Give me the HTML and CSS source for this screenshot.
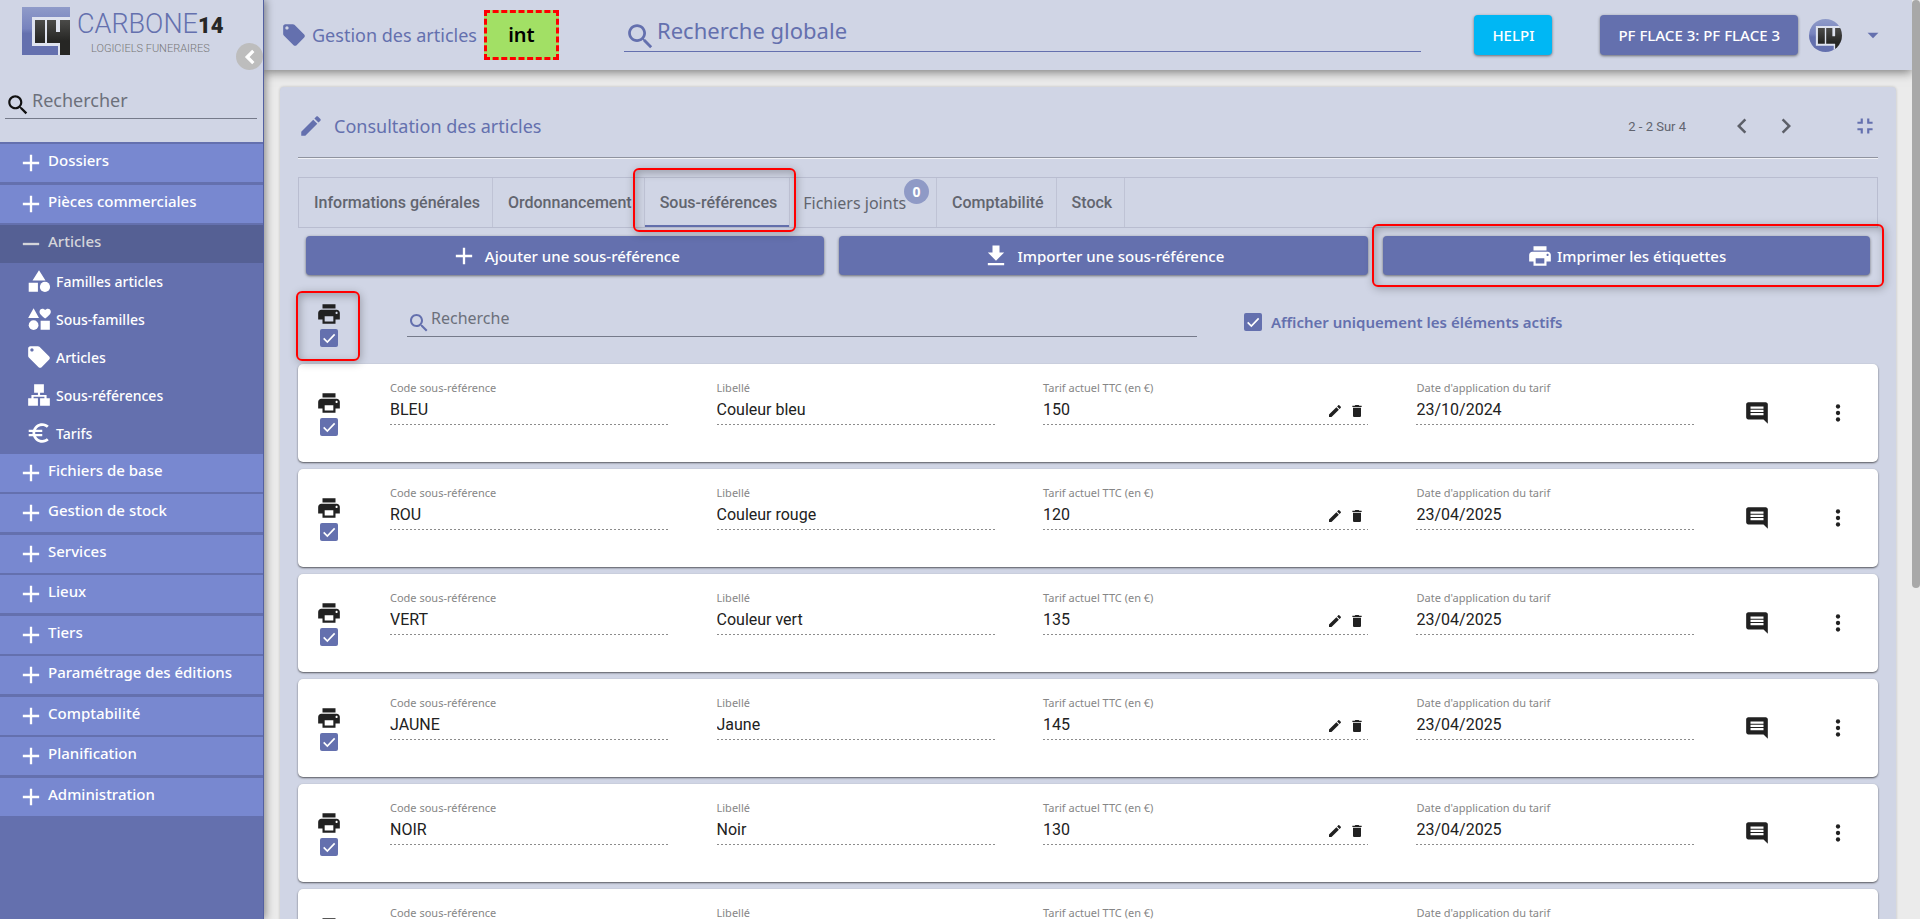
FILE: index.html
```html
<!DOCTYPE html>
<html lang="fr">
<head>
    <meta charset="utf-8">
    <title>Carbone14 - Consultation des articles</title>
    <link rel="stylesheet" href="styles.css">
</head>
<body>
    <svg class="sprite" aria-hidden="true">
        <linearGradient id="logo-blue" x1="0" y1="0" x2="0" y2="1">
            <stop offset="0" stop-color="#8f9bc9"/>
            <stop offset=".45" stop-color="#7783be"/>
            <stop offset=".55" stop-color="#6470ae"/>
        </linearGradient>
        <linearGradient id="logo-dark" x1="0" y1="0" x2="0" y2="1">
            <stop offset="0" stop-color="#4b4b49"/>
            <stop offset=".6" stop-color="#262624"/>
        </linearGradient>
        <symbol id="logo" viewBox="0 0 48 48">
            <path fill="url(#logo-blue)" d="M0 0h48v48H0z"/>
            <path fill="#dfe3ef" d="M10 10h38v38H36v-9H10z"/>
            <path fill="url(#logo-dark)" d="M13 13h10v23H13zM25 13h9v12h4V13h10v35H38V36H25z"/>
        </symbol>
        <symbol id="print" viewBox="0 0 24 24"><path d="M19 8H5c-1.66 0-3 1.34-3 3v6h4v4h12v-4h4v-6c0-1.66-1.34-3-3-3zm-3 11H8v-5h8v5zm3-7c-.55 0-1-.45-1-1s.45-1 1-1 1 .45 1 1-.45 1-1 1zm-1-9H6v4h12V3z"/></symbol>
        <symbol id="search" viewBox="0 0 24 24"><path d="M15.5 14h-.79l-.28-.27C15.41 12.59 16 11.11 16 9.5 16 5.91 13.09 3 9.5 3S3 5.91 3 9.5 5.91 16 9.5 16c1.61 0 3.09-.59 4.23-1.57l.27.28v.79l5 4.99L20.49 19l-4.99-5zm-6 0C7.01 14 5 11.99 5 9.5S7.01 5 9.5 5 14 7.01 14 9.5 11.99 14 9.5 14z"/></symbol>
        <symbol id="edit" viewBox="0 0 24 24"><path d="M3 17.25V21h3.75L17.81 9.94l-3.75-3.75L3 17.25zM20.71 7.04c.39-.39.39-1.02 0-1.41l-2.34-2.34c-.39-.39-1.02-.39-1.41 0l-1.83 1.83 3.75 3.75 1.83-1.83z"/></symbol>
        <symbol id="delete" viewBox="0 0 24 24"><path d="M6 19c0 1.1.9 2 2 2h8c1.1 0 2-.9 2-2V7H6v12zM19 4h-3.5l-1-1h-5l-1 1H5v2h14V4z"/></symbol>
        <symbol id="comment" viewBox="0 0 24 24"><path d="M21.99 4c0-1.1-.89-2-1.99-2H4c-1.1 0-2 .9-2 2v12c0 1.1.9 2 2 2h14l4 4-.01-18zM18 14H6v-2h12v2zm0-3H6V9h12v2zm0-3H6V6h12v2z"/></symbol>
        <symbol id="more" viewBox="0 0 24 24"><circle cx="12" cy="6" r="2"/><circle cx="12" cy="12" r="2"/><circle cx="12" cy="18" r="2"/></symbol>
        <symbol id="exit" viewBox="0 0 24 24"><path d="M5 16h3v3h2v-5H5v2zm3-8H5v2h5V5H8v3zm6 11h2v-3h3v-2h-5v5zm2-11V5h-2v5h5V8h-3z"/></symbol>
        <symbol id="left" viewBox="0 0 24 24"><path d="M15.41 7.41L14 6l-6 6 6 6 1.41-1.41L10.83 12z"/></symbol>
        <symbol id="right" viewBox="0 0 24 24"><path d="M10 6L8.59 7.41 13.17 12l-4.58 4.59L10 18l6-6z"/></symbol>
        <symbol id="caret" viewBox="0 0 24 24"><path d="M7 10l5 5 5-5z"/></symbol>
        <symbol id="plus" viewBox="0 0 24 24"><path d="M19 13h-6v6h-2v-6H5v-2h6V5h2v6h6v2z"/></symbol>
        <symbol id="minus" viewBox="0 0 24 24"><path d="M19 13H5v-2h14v2z"/></symbol>
        <symbol id="download" viewBox="0 0 24 24"><path d="M5 20h14v-2H5v2zM19 9h-4V3H9v6H5l7 7 7-7z"/></symbol>
        <symbol id="tag" viewBox="0 0 24 24"><path d="M21.41 11.58l-9-9C12.05 2.22 11.55 2 11 2H4c-1.1 0-2 .9-2 2v7c0 .55.22 1.05.59 1.42l9 9c.36.36.86.58 1.41.58.55 0 1.05-.22 1.41-.59l7-7c.37-.36.59-.86.59-1.41 0-.55-.23-1.06-.59-1.42zM5.5 7C4.67 7 4 6.33 4 5.5S4.67 4 5.5 4 7 4.67 7 5.5 6.33 7 5.5 7z"/></symbol>
        <symbol id="shapes" viewBox="0 0 24 24"><path d="M12 2l6 9.5H6zM2.5 13.5H11V22H2.5z"/><circle cx="17.5" cy="17.5" r="4.7"/></symbol>
        <symbol id="shapes-four" viewBox="0 0 24 24"><path d="M7 2l5 9H2zM13.5 13.5H22V22h-8.5zM17.7 11.5C14 8.5 12.5 7.2 12.5 5.2c0-1.7 1.2-2.7 2.7-2.7 1 0 1.9.5 2.5 1.3.6-.8 1.5-1.3 2.5-1.3 1.5 0 2.7 1 2.7 2.7 0 2-1.5 3.3-5.2 6.3z"/><circle cx="7" cy="17.7" r="4.5"/></symbol>
        <symbol id="sitemap" viewBox="0 0 24 24"><path d="M7.5 2h9v8H13v2h6v3h3v7h-9v-7h4v-1.5H7V15h4v7H2v-7h3v-3h6v-2H7.5z"/></symbol>
        <symbol id="euro" viewBox="0 0 24 24"><path d="M15 18.5c-2.51 0-4.68-1.42-5.76-3.5H15v-2H8.58c-.05-.33-.08-.66-.08-1s.03-.67.08-1H15V9H9.24C10.32 6.92 12.5 5.5 15 5.5c1.61 0 3.09.59 4.23 1.57L21 5.3C19.41 3.87 17.3 3 15 3c-3.92 0-7.24 2.51-8.48 6H2.5v2h3.56c-.04.33-.06.66-.06 1s.02.67.06 1H2.5v2h4.02c1.24 3.49 4.56 6 8.48 6 2.31 0 4.41-.87 6-2.3l-1.78-1.77c-1.13.98-2.6 1.57-4.22 1.57z"/></symbol>
    </svg>

    <aside class="sidebar">
        <div class="sidebar-top">
            <div class="brand">
                <svg class="brand-mark"><use href="#logo"/></svg>
                <div class="brand-text">
                    <div class="brand-name">CARBONE<b>14</b></div>
                    <div class="brand-sub">LOGICIELS FUNERAIRES</div>
                </div>
            </div>
            <button class="collapse" aria-label="Réduire le menu"><svg class="icon"><use href="#left"/></svg></button>
            <label class="search-field side-search">
                <svg class="icon"><use href="#search"/></svg>
                <input type="text" placeholder="Rechercher" aria-label="Rechercher">
            </label>
        </div>
        <nav class="menu">
            <button class="menu-item"><svg class="icon"><use href="#plus"/></svg>Dossiers</button>
            <button class="menu-item odd"><svg class="icon"><use href="#plus"/></svg>Pièces commerciales</button>
            <button class="menu-item open"><svg class="icon"><use href="#minus"/></svg>Articles</button>
            <div class="submenu">
                <a href="#"><svg class="icon"><use href="#shapes"/></svg>Familles articles</a>
                <a href="#"><svg class="icon"><use href="#shapes-four"/></svg>Sous-familles</a>
                <a href="#"><svg class="icon"><use href="#tag"/></svg>Articles</a>
                <a href="#"><svg class="icon"><use href="#sitemap"/></svg>Sous-références</a>
                <a href="#"><svg class="icon"><use href="#euro"/></svg>Tarifs</a>
            </div>
            <button class="menu-item after-submenu"><svg class="icon"><use href="#plus"/></svg>Fichiers de base</button>
            <button class="menu-item"><svg class="icon"><use href="#plus"/></svg>Gestion de stock</button>
            <button class="menu-item odd"><svg class="icon"><use href="#plus"/></svg>Services</button>
            <button class="menu-item"><svg class="icon"><use href="#plus"/></svg>Lieux</button>
            <button class="menu-item odd"><svg class="icon"><use href="#plus"/></svg>Tiers</button>
            <button class="menu-item"><svg class="icon"><use href="#plus"/></svg>Paramétrage des éditions</button>
            <button class="menu-item odd"><svg class="icon"><use href="#plus"/></svg>Comptabilité</button>
            <button class="menu-item"><svg class="icon"><use href="#plus"/></svg>Planification</button>
            <button class="menu-item odd"><svg class="icon"><use href="#plus"/></svg>Administration</button>
        </nav>
    </aside>

    <div class="page">
        <header class="topbar">
            <svg class="icon"><use href="#tag"/></svg>
            <span class="topbar-title">Gestion des articles</span>
            <span class="env">int</span>
            <label class="search-field global-search">
                <svg class="icon"><use href="#search"/></svg>
                <input type="text" placeholder="Recherche globale" aria-label="Recherche globale">
            </label>
            <button class="btn btn-help">HELPI</button>
            <button class="btn btn-site">PF FLACE 3: PF FLACE 3</button>
            <svg class="avatar"><use href="#logo"/></svg>
            <button class="icon-btn user-menu" aria-label="Menu utilisateur"><svg class="icon"><use href="#caret"/></svg></button>
        </header>

        <main class="card">
            <div class="card-header">
                <svg class="icon"><use href="#edit"/></svg>
                <h1>Consultation des articles</h1>
                <span class="pager-text">2 - 2 Sur 4</span>
                <button class="icon-btn pager-btn" aria-label="Précédent"><svg class="icon"><use href="#left"/></svg></button>
                <button class="icon-btn pager-btn" aria-label="Suivant"><svg class="icon"><use href="#right"/></svg></button>
                <button class="icon-btn exit-btn" aria-label="Quitter le plein écran"><svg class="icon"><use href="#exit"/></svg></button>
            </div>

            <div class="tabs" role="tablist">
                <button class="tab" role="tab">Informations générales</button>
                <button class="tab" role="tab">Ordonnancement</button>
                <button class="tab active marked" role="tab">Sous-références</button>
                <button class="tab tab-files" role="tab">Fichiers joints<span class="badge">0</span></button>
                <button class="tab" role="tab">Comptabilité</button>
                <button class="tab" role="tab">Stock</button>
            </div>

            <div class="actions">
                <button class="btn"><svg class="icon"><use href="#plus"/></svg>Ajouter une sous-référence</button>
                <button class="btn"><svg class="icon"><use href="#download"/></svg>Importer une sous-référence</button>
                <button class="btn btn-print marked"><svg class="icon"><use href="#print"/></svg>Imprimer les étiquettes</button>
            </div>

            <div class="filters">
                <label class="print-check marked">
                    <svg class="icon"><use href="#print"/></svg>
                    <input type="checkbox" checked aria-label="Tout imprimer">
                </label>
                <label class="search-field list-search">
                    <svg class="icon"><use href="#search"/></svg>
                    <input type="text" placeholder="Recherche" aria-label="Recherche">
                </label>
                <label class="only-active"><input type="checkbox" checked>Afficher uniquement les éléments actifs</label>
            </div>

            <div class="rows" id="rows"></div>
        </main>
    </div>
    <div class="scrollbar"><div class="thumb"></div></div>

    <script>
        const items = [
            ['BLEU', 'Couleur bleu', '150', '23/10/2024'],
            ['ROU', 'Couleur rouge', '120', '23/04/2025'],
            ['VERT', 'Couleur vert', '135', '23/04/2025'],
            ['JAUNE', 'Jaune', '145', '23/04/2025'],
            ['NOIR', 'Noir', '130', '23/04/2025'],
            ['BLANC', 'Blanc', '130', '23/04/2025']
        ];

        const icon = (name) => `<svg class="icon"><use href="#${name}"/></svg>`;

        const field = (id, label, value, buttons = '') => `
            <div class="field">
                <label for="${id}">${label}</label>
                <div class="field-line"><input type="text" id="${id}" value="${value}" readonly>${buttons}</div>
            </div>`;

        const priceButtons = `
            <button class="icon-btn small" aria-label="Modifier">${icon('edit')}</button>
            <button class="icon-btn small" aria-label="Supprimer">${icon('delete')}</button>`;

        document.getElementById('rows').innerHTML = items.map(([code, name, price, date], i) => `
            <div class="row">
                <label class="print-check">${icon('print')}<input type="checkbox" checked aria-label="Imprimer ${code}"></label>
                ${field('code-' + i, 'Code sous-référence', code)}
                ${field('name-' + i, 'Libellé', name)}
                ${field('price-' + i, 'Tarif actuel TTC (en €)', price, priceButtons)}
                ${field('date-' + i, "Date d'application du tarif", date)}
                <button class="icon-btn" aria-label="Commentaire">${icon('comment')}</button>
                <button class="icon-btn" aria-label="Plus">${icon('more')}</button>
            </div>`).join('');
    </script>
</body>
</html>
```
FILE: styles.css
```css
* {
    box-sizing: border-box;
}
body {
    margin: 0;
    display: flex;
    height: 100vh;
    overflow: hidden;
    background: #ebebeb;
    color: #212121;
    font-family: "Noto Sans", sans-serif;
    font-size: 16px;
}
button, input {
    font: inherit;
    color: inherit;
}
button {
    border: 0;
    padding: 0;
    background: none;
    cursor: pointer;
}
.sprite {
    position: absolute;
    width: 0;
    height: 0;
}
.icon {
    width: 26px;
    height: 26px;
    flex: none;
    fill: currentColor;
}
.icon-btn {
    display: flex;
    align-items: center;
    justify-content: center;
}

/* sidebar */
.sidebar {
    width: 264px;
    flex: none;
    background: #6470ae;
    border-right: 1px solid #5360a0;
    box-shadow: 2px 0 8px rgba(0, 0, 0, 0.4);
    position: relative;
    z-index: 2;
}
.sidebar-top {
    height: 142px;
    padding: 7px 6px 0 5px;
    background: #d0d5e5;
    position: relative;
}
.brand {
    display: flex;
    gap: 7px;
    padding-left: 17px;
    font-family: Roboto, sans-serif;
    font-weight: 300;
    white-space: nowrap;
}
.brand-mark {
    width: 48px;
    height: 48px;
    flex: none;
}
.brand-name {
    color: #6470ae;
    font-size: 27px;
    line-height: 34px;
}
.brand-name b {
    color: #262626;
    font-weight: 900;
    font-size: 22px;
}
.brand-sub {
    color: #777;
    font-size: 11px;
    line-height: 12px;
    padding-left: 14px;
}
.collapse {
    position: absolute;
    right: 0;
    top: 43px;
    width: 27px;
    height: 27px;
    border-radius: 50%;
    background: #bdbdbd;
    color: #fff;
    display: flex;
    align-items: center;
    justify-content: center;
}
.collapse .icon {
    stroke: #fff;
}
.search-field {
    display: flex;
    align-items: center;
    border-bottom: 1px solid #757a8a;
}
.search-field input {
    flex: 1;
    min-width: 0;
    border: 0;
    padding: 0 0 4px;
    background: none;
    outline: none;
}
.search-field input::placeholder {
    color: #6c707b;
    opacity: 1;
}
.search-field .icon {
    align-self: flex-end;
}
.side-search {
    margin-top: 30px;
    height: 34px;
    font-size: 18px;
}
.side-search .icon {
    color: #111;
    margin-right: 1px;
}

.menu {
    display: flex;
    flex-direction: column;
}
.menu-item {
    display: flex;
    align-items: center;
    height: 40px;
    padding: 0 0 6px 17px;
    border-top: 2px solid #6470ae;
    background: #7888d0;
    color: #fff;
    font-size: 15px;
    font-weight: 500;
    text-align: left;
}
.menu-item.odd {
    height: 41px;
    border-top-width: 3px;
}
.menu-item.after-submenu {
    height: 39px;
    border-top-width: 1px;
}
.menu-item .icon {
    width: 28px;
    height: 28px;
    margin: 6px 3px 0 0;
}
.menu-item.open {
    background: #556094;
    color: #d4d5da;
}
.submenu a {
    display: flex;
    align-items: center;
    gap: 4px;
    height: 38px;
    padding: 0 0 2px 26px;
    color: #fff;
    font-size: 14px;
    font-weight: 500;
    text-decoration: none;
}

/* top bar */
.page {
    flex: 1;
    min-width: 0;
}
.topbar {
    display: flex;
    align-items: center;
    height: 70px;
    padding: 0 26px 0 17px;
    background: #d0d5e5;
    color: #6470ae;
    box-shadow: 0 2px 10px rgba(0, 0, 0, 0.5);
    position: relative;
}
.topbar-title {
    margin: 0 7px 0 5px;
    font-size: 18px;
}
.env {
    width: 75px;
    height: 50px;
    border: 3px dashed #f00;
    background: #a2e065;
    color: #000;
    font-size: 20px;
    font-weight: 600;
    line-height: 44px;
    text-align: center;
}
.global-search {
    flex: 1;
    height: 34px;
    margin: 0 53px 0 65px;
    border-color: #6470ae;
    font-size: 22px;
}
.global-search .icon {
    width: 33px;
    height: 33px;
    margin-bottom: -2px;
}
.global-search input {
    padding-bottom: 10px;
}
.global-search input::placeholder {
    color: #6470ae;
}
.btn {
    display: flex;
    align-items: center;
    justify-content: center;
    height: 39px;
    border-radius: 4px;
    background: #6470ae;
    color: #fff;
    font-size: 15px;
    font-weight: 500;
    white-space: nowrap;
    box-shadow: 0 1px 3px rgba(0, 0, 0, 0.5);
}
.btn-help, .btn-site {
    height: 40px;
    padding: 0 18px;
}
.btn-help {
    background: #00b7f4;
    margin-right: 48px;
}
.avatar {
    width: 33px;
    height: 33px;
    margin-left: 11px;
    border-radius: 50%;
}
.user-menu {
    margin-left: 18px;
}

/* card */
.card {
    margin: 17px 16px 0;
    padding: 0 18px;
    border-radius: 4px;
    background: #d0d5e5;
    box-shadow: 0 0 3px rgba(0, 0, 0, 0.2);
}
.card-header {
    display: flex;
    align-items: center;
    height: 71px;
    padding-top: 8px;
    border-bottom: 1px solid #8f939f;
    box-shadow: 0 1px 0 #f0f1f6;
    color: #6470ae;
}
.card-header h1 {
    flex: 1;
    margin: 0 0 0 10px;
    font-size: 18px;
    font-weight: 400;
}
.pager-text {
    margin-right: 40px;
    color: #61646f;
    font-family: Roboto, sans-serif;
    font-size: 13px;
}
.pager-btn {
    width: 32px;
    margin-right: 12px;
    color: #5c5f68;
}
.pager-btn .icon {
    width: 30px;
    height: 30px;
}
.exit-btn {
    margin-left: 38px;
}

.tabs {
    display: flex;
    height: 51px;
    margin-top: 19px;
    border: 1px solid #b9bdd0;
}
.tab {
    position: relative;
    padding: 0 12px 0 15px;
    border-right: 1px solid #bfc3d5;
    color: #62656f;
    font-family: Roboto, sans-serif;
    font-weight: 500;
    white-space: nowrap;
}
.tab.active {
    box-shadow: inset 0 -2px #6470ae;
}
.tab-files {
    padding: 0 30px 0 13px;
    font-family: "Noto Sans", sans-serif;
    font-weight: 400;
}
.badge {
    position: absolute;
    top: 1px;
    right: 7px;
    width: 25px;
    height: 25px;
    border-radius: 50%;
    background: #8f9ac6;
    color: #fff;
    font-size: 14px;
    font-weight: 700;
    line-height: 25px;
    text-align: center;
}

.actions {
    display: flex;
    gap: 15px;
    padding: 8px 8px 0;
}
.actions .btn {
    flex: 1 1 auto;
}
.actions .icon {
    width: 28px;
    height: 28px;
    margin-right: 7px;
}
.actions .btn-print .icon {
    width: 26px;
    height: 26px;
    margin-right: 4px;
}

/* red frames round the marked controls */
.marked {
    position: relative;
}
.marked::after {
    content: "";
    position: absolute;
    inset: -10px -7px -5px -12px;
    border: 2px solid #f00;
    border-radius: 6px;
    box-shadow: 1px 2px 8px rgba(0, 0, 0, 0.25), inset 2px 3px 8px rgba(0, 0, 0, 0.25);
    pointer-events: none;
}
.btn-print.marked::after {
    inset: -12px -14px -12px -11px;
}
.print-check.marked::after {
    inset: -10px -18px -14px -20px;
}

.filters {
    display: flex;
    align-items: flex-start;
    padding: 26px 0 17px 18px;
}
input[type="checkbox"] {
    appearance: none;
    width: 18px;
    height: 18px;
    margin: 0;
    flex: none;
    border-radius: 2px;
    background: #6470ae url("data:image/svg+xml,%3Csvg xmlns='http://www.w3.org/2000/svg' viewBox='0 0 24 24'%3E%3Cpath fill='none' stroke='white' stroke-width='2.5' d='M4 12.5l5.5 5.5L20.5 6.5'/%3E%3C/svg%3E") center / 16px no-repeat;
}
.print-check {
    display: flex;
    flex-direction: column;
    align-items: center;
    gap: 2px;
    width: 26px;
}
.list-search {
    flex: 1;
    height: 33px;
    margin: 3px 47px 0 65px;
}
.list-search .icon {
    width: 24px;
    height: 24px;
    margin-bottom: 1px;
    color: #6470ae;
}
.filters .only-active {
    display: flex;
    align-items: center;
    gap: 9px;
    width: 634px;
    margin-top: 11px;
    color: #6470ae;
    font-size: 15px;
    font-weight: 600;
}

/* list */
.rows {
    display: flex;
    flex-direction: column;
    gap: 7px;
}
.row {
    display: grid;
    grid-template-columns: 26px 279fr 279fr 326fr 279fr 28px 38px;
    column-gap: 48px;
    align-items: start;
    height: 98px;
    padding: 16px 21px 0 18px;
    border-radius: 5px;
    background: #fff;
    box-shadow: 0 1px 2px rgba(0, 0, 0, 0.6);
}
.row .print-check {
    margin-top: 10px;
}
.row > .icon-btn {
    margin-top: 20px;
}
.field {
    min-width: 0;
}
.field label {
    display: block;
    color: #868686;
    font-size: 11px;
    line-height: 16px;
}
.field-line {
    display: flex;
    align-items: center;
    height: 29px;
    background: linear-gradient(to right, #8c8c8c 50%, transparent 0) bottom left / 4px 1px repeat-x;
}
.field input {
    flex: 1;
    min-width: 0;
    border: 0;
    padding: 0 0 2px;
    background: none;
    outline: none;
    font-family: Roboto, sans-serif;
}
.small {
    width: 22px;
}
.small .icon {
    width: 16px;
    height: 16px;
}

.scrollbar {
    width: 8px;
    flex: none;
    background: #ebebeb;
    position: relative;
    z-index: 1;
}
.thumb {
    height: 64%;
    border-radius: 4px;
    background: #a8a8a8;
}
```
